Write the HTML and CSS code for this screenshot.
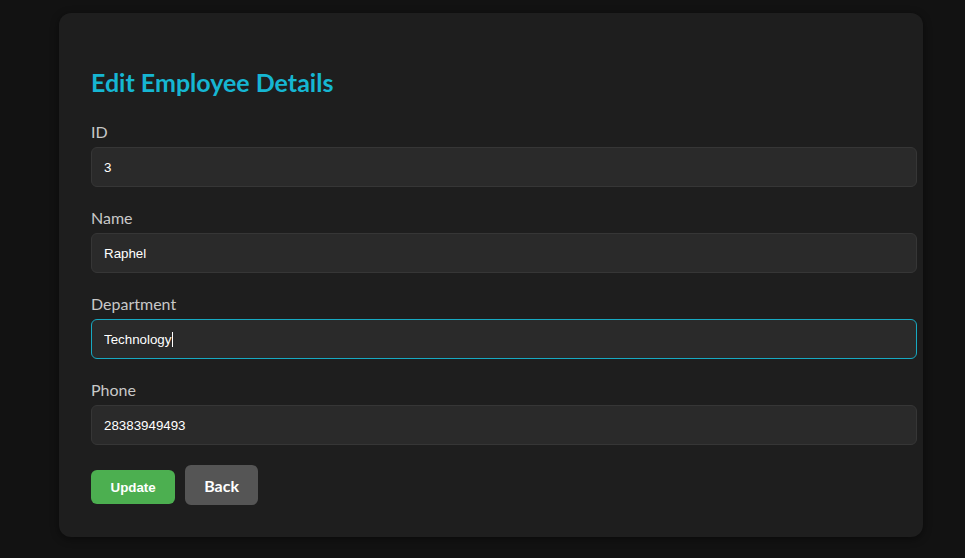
FILE: index.html
```
<!DOCTYPE html>
<html>
<head>
<meta charset="utf-8">
<link rel="stylesheet" href="styles.css">
</head>
<body>
<div class="page">
  <div class="card">
    <h2 class="title">Edit Employee Details</h2>
    <form class="form">
      <label class="label" for="id">ID</label>
      <input class="input" id="id" type="text" value="3">
      <label class="label" for="name">Name</label>
      <input class="input" id="name" type="text" value="Raphel">
      <label class="label" for="dept">Department</label>
      <div class="field-wrap">
        <input class="input input-focus" id="dept" type="text" value="Technology">
        <span class="caret"></span>
      </div>
      <label class="label" for="phone">Phone</label>
      <input class="input" id="phone" type="text" value="28383949493">
      <div class="actions">
        <button type="button" class="btn btn-update">Update</button>
        <button type="button" class="btn btn-back">Back</button>
      </div>
    </form>
  </div>
</div>
</body>
</html>
```
FILE: styles.css
```
html, body {
  margin: 0;
  padding: 0;
  background: #121212;
  height: 100%;
}
.page {
  padding: 13px 42px 0 59px;
}
.card {
  background: #1e1e1e;
  border-radius: 12px;
  padding: 32px;
  box-shadow: 0 2px 8px rgba(0, 0, 0, 0.45);
  font-family: Lato, "Open Sans", sans-serif;
}
.title {
  margin: 22px 0 24px;
  font-size: 25px;
  line-height: 30px;
  font-weight: 700;
  color: #16b6d2;
}
.form {
  display: flex;
  flex-direction: column;
  align-items: flex-start;
}
.label {
  display: block;
  font-size: 16px;
  line-height: 22px;
  color: #c8c8c8;
  margin-bottom: 4px;
}
.field-wrap {
  position: relative;
}
.input {
  display: block;
  width: 800px;
  height: 16px;
  padding: 11px 12px;
  margin: 0 0 20px;
  border: 1px solid #363636;
  border-radius: 6px;
  background: #2a2a2a;
  color: #ffffff;
  font-family: "Liberation Sans", Arial, sans-serif;
  font-size: 13.333px;
  outline: none;
  caret-color: #ffffff;
}
.input-focus {
  border-color: #17a9c2;
}
.caret {
  position: absolute;
  left: 81px;
  top: 13px;
  width: 1px;
  height: 15px;
  background: #ffffff;
}
.actions {
  display: flex;
  align-items: flex-start;
  gap: 10px;
}
.btn {
  border: none;
  border-radius: 6px;
  color: #ffffff;
  font-weight: 700;
  cursor: pointer;
}
.btn-update {
  margin-top: 5px;
  height: 34px;
  padding: 0 19.5px;
  background: #4caf50;
  font-family: "Liberation Sans", Arial, sans-serif;
  font-size: 13.333px;
}
.btn-back {
  height: 40px;
  padding: 0 19px;
  background: #555555;
  font-family: Lato, "Open Sans", sans-serif;
  font-size: 16px;
}
```
